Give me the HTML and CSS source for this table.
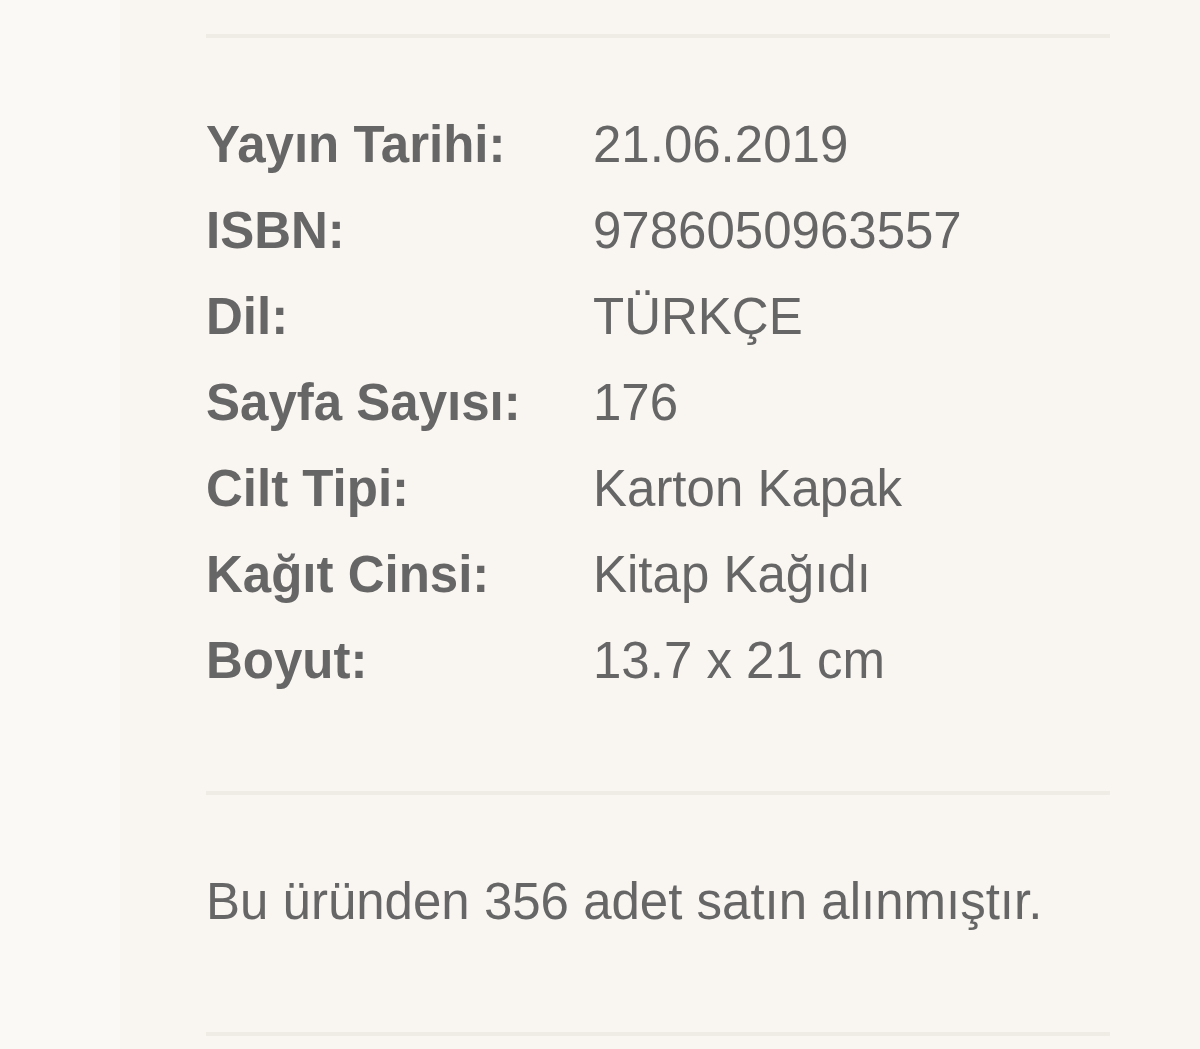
FILE: index.html
```html
<!DOCTYPE html>
<html lang="tr">
<head>
    <meta charset="UTF-8">
    <meta name="viewport" content="width=device-width, initial-scale=1.0">
    <title>Kitap Bilgileri</title>
    <link rel="stylesheet" href="styles.css">
</head>
<body>
    <div class="page">
        <div class="side"></div>

        <div class="panel">
            <div class="divider"></div>

            <div class="specs">
                <div class="row"><span class="label">Yayın Tarihi:</span><span class="value">21.06.2019</span></div>
                <div class="row"><span class="label">ISBN:</span><span class="value">9786050963557</span></div>
                <div class="row"><span class="label">Dil:</span><span class="value">TÜRKÇE</span></div>
                <div class="row"><span class="label">Sayfa Sayısı:</span><span class="value">176</span></div>
                <div class="row"><span class="label">Cilt Tipi:</span><span class="value">Karton Kapak</span></div>
                <div class="row"><span class="label">Kağıt Cinsi:</span><span class="value">Kitap Kağıdı</span></div>
                <div class="row"><span class="label">Boyut:</span><span class="value">13.7 x 21 cm</span></div>
            </div>

            <div class="divider"></div>

            <p class="sold">Bu üründen 356 adet satın alınmıştır.</p>

            <div class="divider"></div>
        </div>
    </div>
</body>
</html>
```

FILE: styles.css
```css
body {
    margin: 0;
    font-family: 'Liberation Sans', Arial, sans-serif;
    color: #666;
    background-color: #fbf9f6;
}
.page {
    display: flex;
    min-height: 1049px;
}
.side {
    width: 120px;
    flex-shrink: 0;
    background-color: #fbf9f6;
}
.panel {
    flex: 1;
    background-color: #f9f5f1;
    padding: 34px 90px 0 86px;
}
.divider {
    border-top: 4px solid #efebe5;
}
.specs {
    margin: 64px 0 87px;
    font-size: 51px;
    line-height: 86px;
}
.row {
    display: flex;
}
.label {
    width: 387px;
    flex-shrink: 0;
    font-weight: bold;
}
.sold {
    margin: 64px 0 87px;
    font-size: 51px;
    line-height: 86px;
}
```
